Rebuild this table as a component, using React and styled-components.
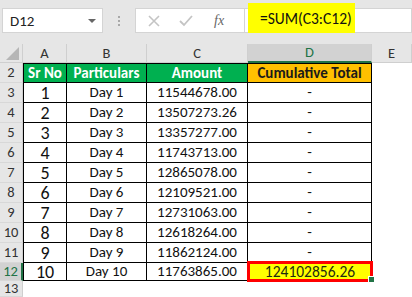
import React from 'react';
import styled, { createGlobalStyle } from 'styled-components';

const GlobalStyle = createGlobalStyle`
  html, body {
    margin: 0;
    padding: 0;
    background: #e6e6e6;
  }
  body {
    font-family: Carlito, Lato, "Liberation Sans", sans-serif;
    width: 412px;
    height: 297px;
    overflow: hidden;
  }
`;

const rows = [
  [1, 'Day 1', '11544678.00'],
  [2, 'Day 2', '13507273.26'],
  [3, 'Day 3', '13357277.00'],
  [4, 'Day 4', '11743713.00'],
  [5, 'Day 5', '12865078.00'],
  [6, 'Day 6', '12109521.00'],
  [7, 'Day 7', '12731063.00'],
  [8, 'Day 8', '12618264.00'],
  [9, 'Day 9', '11862124.00'],
  [10, 'Day 10', '11763865.00'],
];

const Page = styled.div`
  width: 412px;
  height: 297px;
  display: flex;
  flex-direction: column;
  background: #e6e6e6;
  overflow: hidden;
`;

const Toolbar = styled.div`
  height: 44px;
  flex-shrink: 0;
  display: flex;
  align-items: flex-start;
  padding: 8px 0 0 2px;
  box-sizing: border-box;
`;

const NameBox = styled.div`
  width: 101px;
  height: 25px;
  box-sizing: border-box;
  background: #fff;
  border: 1px solid #d4d4d4;
  display: flex;
  align-items: center;
  justify-content: space-between;
  padding: 0 6px 0 7px;
  font-size: 15px;
  color: #222;
`;

const Caret = styled.span`
  width: 0;
  height: 0;
  border-left: 4px solid transparent;
  border-right: 4px solid transparent;
  border-top: 4px solid #666;
`;

const Dots = styled.div`
  width: 32px;
  height: 25px;
  display: flex;
  flex-direction: column;
  align-items: center;
  justify-content: center;
  gap: 2px;
  span {
    width: 2px;
    height: 2px;
    background: #a8a8a8;
  }
`;

const Buttons = styled.div`
  width: 109px;
  height: 25px;
  box-sizing: border-box;
  background: #fff;
  border: 1px solid #d4d4d4;
  border-right: none;
  display: flex;
  align-items: center;
  padding-left: 12px;
  gap: 19px;
`;

const Fx = styled.span`
  font-family: "Liberation Serif", serif;
  font-style: italic;
  font-size: 14px;
  color: #666;
  margin-left: 2px;
`;

const FormulaField = styled.div`
  flex: 1;
  height: 25px;
  box-sizing: border-box;
  background: #fff;
  border: 1px solid #d4d4d4;
  display: flex;
  align-items: flex-end;
  padding-left: 3px;
`;

const Highlight = styled.div`
  width: 107px;
  height: 30px;
  flex-shrink: 0;
  background: #ffff00;
  display: flex;
  align-items: center;
  padding-left: 12px;
  box-sizing: border-box;
  font-size: 15.5px;
  color: #111;
  margin-bottom: -1px;
`;

const Sheet = styled.div`
  flex: 1;
  display: grid;
  grid-template-columns: 23px 44px 80px 101px 124px 1fr;
  grid-template-rows: 19px repeat(10, 20px) 18px 1fr;
  background: #fff;
`;

const ColHead = styled.div`
  position: relative;
  box-sizing: border-box;
  display: flex;
  align-items: center;
  justify-content: center;
  font-size: 14.5px;
  line-height: 1;
  color: ${p => (p.$active ? '#217346' : '#333')};
  background: ${p => (p.$active ? '#d2d2d2' : '#e6e6e6')};
  border-right: 1px solid #cfcfcf;
  border-bottom: ${p => (p.$active ? '2px solid #217346' : '1px solid #cfcfcf')};
`;

const Corner = styled.svg`
  position: absolute;
  right: 3px;
  bottom: 2px;
`;

const RowHead = styled.div`
  box-sizing: border-box;
  display: flex;
  align-items: center;
  justify-content: center;
  font-size: 14.5px;
  line-height: 1;
  color: ${p => (p.$active ? '#217346' : '#333')};
  background: ${p => (p.$active ? '#d2d2d2' : '#e6e6e6')};
  border-bottom: 1px solid #d8d8d8;
  border-right: ${p => (p.$active ? '2px solid #217346' : '1px solid #cfcfcf')};
`;

const Cell = styled.div`
  box-sizing: border-box;
  display: flex;
  align-items: center;
  justify-content: center;
  white-space: nowrap;
  line-height: 1;
  font-size: ${p => (p.$big ? '18px' : '15px')};
  font-weight: ${p => (p.$bold ? 'bold' : 'normal')};
  color: ${p => p.$color || '#111'};
  background: ${p => p.$bg || '#fff'};
  border-right: 1px solid #000;
  border-bottom: 1px solid #000;
  border-left: ${p => (p.$first ? '1px solid #000' : 'none')};
  border-top: ${p => (p.$top ? '1px solid #000' : 'none')};
`;

const SelectedCell = styled.div`
  position: relative;
  box-sizing: border-box;
  display: flex;
  align-items: center;
  justify-content: center;
  background: #ffff00;
  font-size: 15.5px;
  line-height: 1;
  color: #1e2a10;
  border: 3px solid #ff0000;
  margin: -2px -1px -1px -1px;
`;

const FillHandle = styled.span`
  position: absolute;
  right: -5px;
  bottom: -4px;
  width: 5px;
  height: 5px;
  background: #217346;
  border: 1px solid #fff;
`;

const Blank = styled.div`
  background: #fff;
`;

export default function App() {
  return (
    <Page>
      <GlobalStyle />
      <Toolbar>
        <NameBox>
          D12
          <Caret />
        </NameBox>
        <Dots>
          <span />
          <span />
          <span />
        </Dots>
        <Buttons>
          <svg width="12" height="12" viewBox="0 0 12 12">
            <path d="M1 1 L11 11 M11 1 L1 11" stroke="#c4c4c4" strokeWidth="1.6" />
          </svg>
          <svg width="14" height="12" viewBox="0 0 14 12">
            <path d="M1 6 L5 10 L13 1" stroke="#c4c4c4" strokeWidth="1.8" fill="none" />
          </svg>
          <Fx>fx</Fx>
        </Buttons>
        <FormulaField>
          <Highlight>=SUM(C3:C12)</Highlight>
        </FormulaField>
      </Toolbar>
      <Sheet>
        <ColHead>
          <Corner width="13" height="13" viewBox="0 0 13 13">
            <path d="M13 0 L13 13 L0 13 Z" fill="#b6b6b6" />
          </Corner>
        </ColHead>
        <ColHead>A</ColHead>
        <ColHead>B</ColHead>
        <ColHead>C</ColHead>
        <ColHead $active>D</ColHead>
        <ColHead>E</ColHead>

        <RowHead>2</RowHead>
        <Cell $first $top $bg="#00b050" $color="#fff" $bold>Sr No</Cell>
        <Cell $top $bg="#00b050" $color="#fff" $bold>Particulars</Cell>
        <Cell $top $bg="#00b050" $color="#fff" $bold>Amount</Cell>
        <Cell $top $bg="#ffc000" $color="#1a1a1a" $bold>Cumulative Total</Cell>
        <Blank />

        {rows.map(([n, day, amt], i) => {
          const last = i === rows.length - 1;
          return (
            <React.Fragment key={n}>
              <RowHead $active={last}>{n + 2}</RowHead>
              <Cell $first $big>{n}</Cell>
              <Cell>{day}</Cell>
              <Cell>{amt}</Cell>
              {last ? (
                <SelectedCell>
                  124102856.26
                  <FillHandle />
                </SelectedCell>
              ) : (
                <Cell>-</Cell>
              )}
              <Blank />
            </React.Fragment>
          );
        })}

        <RowHead>13</RowHead>
        <Blank />
        <Blank />
        <Blank />
        <Blank />
        <Blank />
      </Sheet>
    </Page>
  );
}
